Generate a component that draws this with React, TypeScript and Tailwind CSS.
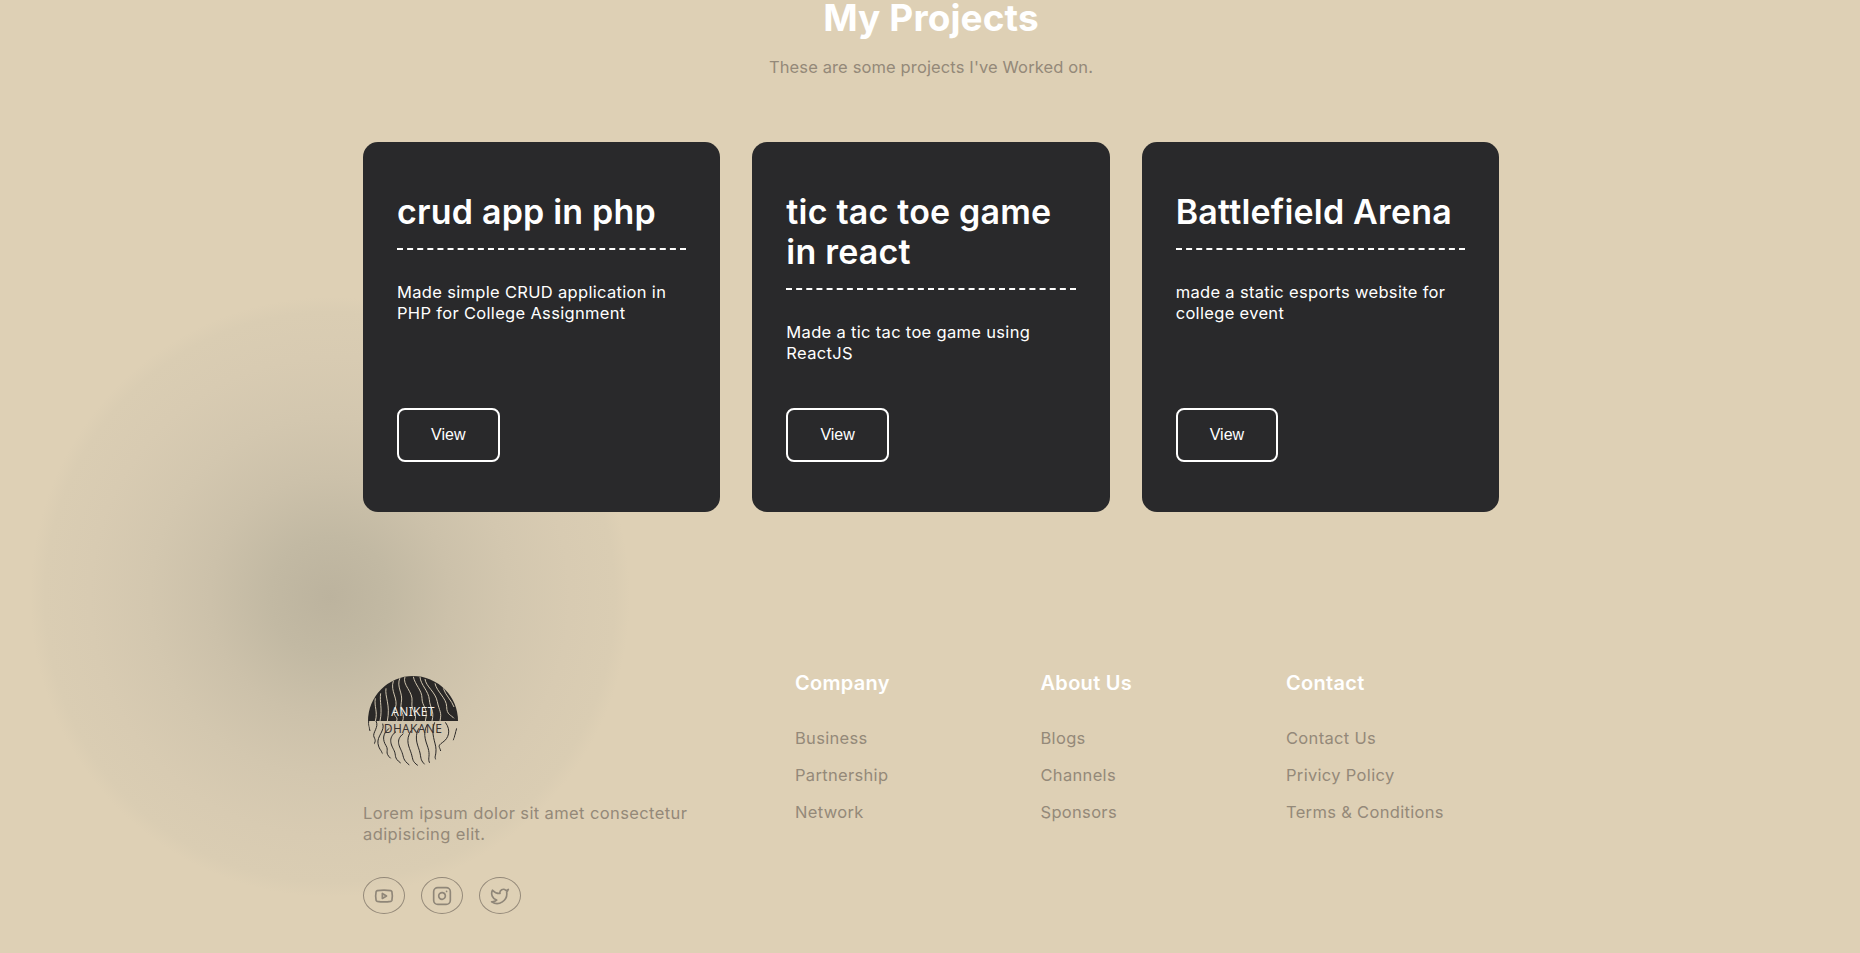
import { Instagram, Twitter, Youtube } from "lucide-react";

const projects = [
  { title: "crud app in php", text: "Made simple CRUD application in PHP for College Assignment" },
  { title: "tic tac toe game in react", text: "Made a tic tac toe game using ReactJS" },
  { title: "Battlefield Arena", text: "made a static esports website for college event" },
];

const columns = [
  { title: "Company", links: ["Business", "Partnership", "Network"] },
  { title: "About Us", links: ["Blogs", "Channels", "Sponsors"] },
  { title: "Contact", links: ["Contact Us", "Privicy Policy", "Terms & Conditions"] },
];

const topLines = [
  "M76 100C72 125 84 140 76 168",
  "M92 85C88 110 98 130 90 168",
  "M108 70C104 95 122 120 112 168",
  "M130 48C120 80 146 100 136 130S146 150 140 168",
  "M150 38C138 66 160 84 154 112S166 146 158 168",
  "M165 35C156 60 190 80 186 110S204 145 194 168",
  "M190 35C195 60 216 75 216 100S236 130 226 168",
  "M210 36C212 60 236 78 238 104S254 136 246 168",
  "M225 42C228 65 256 80 262 110S276 140 270 168",
  "M255 55C260 80 290 100 290 125S304 150 312 160",
  "M280 70C286 90 306 108 312 126",
];

const bottomLines = [
  "M56 168C54 178 58 190 60 198",
  "M78 168C88 186 66 204 72 216S76 230 70 240",
  "M98 176C106 196 80 214 84 236S98 256 96 270",
  "M118 190C96 206 98 226 108 242S102 262 122 280",
  "M138 200C112 220 124 240 132 256S130 278 152 294",
  "M160 206C134 226 150 246 156 262S158 284 178 300",
  "M184 196C164 226 178 246 184 266S186 288 204 302",
  "M206 190C190 222 206 244 210 264S212 286 226 300",
  "M232 178C214 210 232 236 236 256S232 282 240 296",
  "M254 172C240 206 258 232 258 254S252 274 258 284",
  "M286 172C304 196 296 220 278 232S270 246 272 258",
  "M320 190C316 204 314 216 310 226",
];

function Logo() {
  return (
    <div className="relative h-[90px] w-[90px]">
      <svg width="90" height="90" viewBox="54 33 270 270" fill="none">
        <clipPath id="logo-top">
          <path d="M54 168A135 135 0 0 1 324 168Z" />
        </clipPath>
        <clipPath id="logo-bottom">
          <path d="M54 168A135 135 0 0 0 324 168Z" />
        </clipPath>
        <path d="M54 168A135 135 0 0 1 324 168Z" fill="#2a2827" />
        <g clipPath="url(#logo-top)" stroke="#cfc4ae" strokeWidth="3">
          {topLines.map((d) => (
            <path key={d} d={d} />
          ))}
        </g>
        <g clipPath="url(#logo-bottom)" stroke="#2a2827" strokeWidth="3">
          {bottomLines.map((d) => (
            <path key={d} d={d} />
          ))}
        </g>
      </svg>
      <div className="absolute inset-x-0 top-[27px] text-center font-['Noto_Sans',sans-serif] text-[12px] leading-[17px] tracking-[0.3px]">
        <div className="text-[#f4f0e8]">ANIKET</div>
        <div className="text-[#3a3230]">DHAKANE</div>
      </div>
    </div>
  );
}

export default function App() {
  return (
    <div className="relative h-[953px] overflow-hidden bg-[#ded0b5] font-['Inter',sans-serif]">
      <div className="absolute left-[30px] top-[297px] h-[600px] w-[600px] rounded-full bg-[radial-gradient(closest-side,#bcb39e_0%,#c2b9a3_20%,#ccc1aa_40%,#d3c7af_60%,#d8cbb2_80%,#dacdb3_95%,#ded0b5_100%)]" />

      <div className="relative ml-[363px] w-[1136px]">
        <h1 className="text-center text-[37px] font-bold leading-[36px] tracking-[0.1px] text-white">My Projects</h1>
        <p className="mt-[19px] text-center text-[16.5px] leading-[24px] tracking-[0.13px] text-[#948979]">
          These are some projects I've Worked on.
        </p>

        <div className="mt-[63px] grid grid-cols-3 gap-[32px]">
          {projects.map((p) => (
            <div key={p.title} className="flex h-[370px] flex-col rounded-[15px] bg-[#29292b] px-[34px] pt-[50px] pb-[50px]">
              <h2 className="border-b-2 border-dashed border-white pb-[16px] text-[34px] font-semibold leading-[40px] tracking-[0.2px] text-white">
                {p.title}
              </h2>
              <p className="mt-[32px] text-[16.5px] leading-[21px] tracking-[0.32px] text-white">{p.text}</p>
              <button className="mt-auto h-[54px] w-[102.5px] shrink-0 rounded-[8px] border-2 border-white font-['Liberation_Sans',sans-serif] text-[16px] text-white">
                View
              </button>
            </div>
          ))}
        </div>

        <footer className="mt-[158px] flex">
          <div className="w-[432px] shrink-0">
            <div className="ml-[5px] mt-[6px]">
              <Logo />
            </div>
            <p className="mt-[37px] w-[340px] text-[16.5px] leading-[21px] tracking-[0.39px] text-[#948979]">
              Lorem ipsum dolor sit amet consectetur adipisicing elit.
            </p>
            <div className="mt-[32px] flex gap-[16px]">
              {[Youtube, Instagram, Twitter].map((Icon, i) => (
                <div key={i} className="flex h-[37px] w-[42px] items-center justify-center rounded-[50%] border border-[#948979] text-[#8f8678]">
                  <Icon size={20} strokeWidth={2} />
                </div>
              ))}
            </div>
          </div>
          {columns.map((c) => (
            <div key={c.title} className="w-[245.5px] shrink-0">
              <h3 className="text-[20px] font-semibold leading-[26px] tracking-[0.3px] text-white">{c.title}</h3>
              <ul className="mt-[30px] flex flex-col gap-[13px]">
                {c.links.map((l) => (
                  <li key={l} className="text-[16.5px] leading-[24px] tracking-[0.32px] text-[#948979]">
                    {l}
                  </li>
                ))}
              </ul>
            </div>
          ))}
        </footer>
      </div>
    </div>
  );
}
